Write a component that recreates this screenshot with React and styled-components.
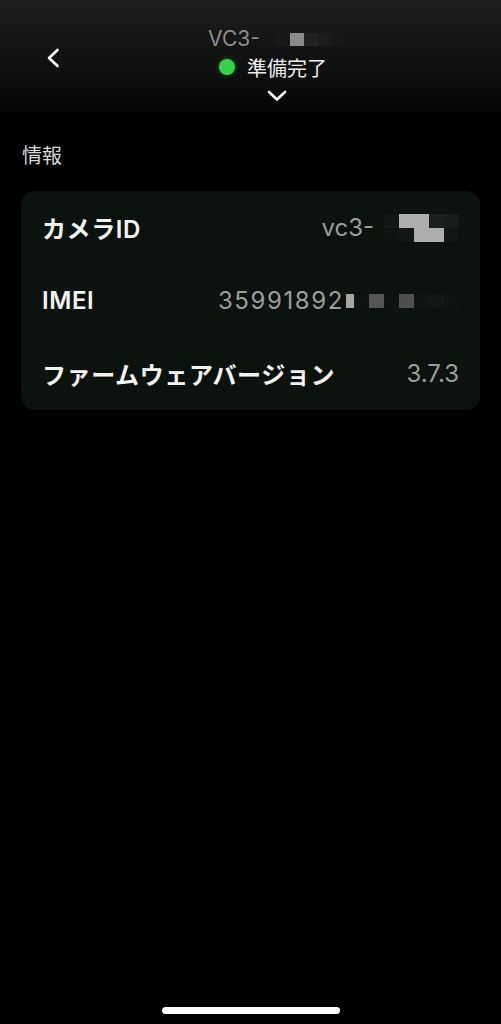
import React from "react";
import styled, { createGlobalStyle } from "styled-components";

const GlobalStyle = createGlobalStyle`
  html, body {
    margin: 0;
    padding: 0;
    background: #000;
  }
  body {
    font-family: Inter, "Noto Sans CJK JP", sans-serif;
    -webkit-font-smoothing: antialiased;
  }
`;

const Page = styled.div`
  min-height: 100vh;
  display: flex;
  flex-direction: column;
  background: linear-gradient(180deg, #1c1f1c 0px, #0a0b0a 90px, #000 125px);
`;

const Header = styled.header`
  display: flex;
  align-items: flex-start;
  padding: 27px 22px 0 31px;
`;

const BackButton = styled.button`
  width: 44px;
  height: 44px;
  margin-top: 9px;
  padding: 0;
  border: none;
  background: none;
  display: flex;
  align-items: center;
  justify-content: center;
  cursor: pointer;
`;

const TitleBlock = styled.div`
  flex: 1;
  display: flex;
  flex-direction: column;
  align-items: center;
`;

const Title = styled.div`
  display: flex;
  align-items: center;
  height: 24px;
  font-size: 21px;
  line-height: 24px;
  color: #8d8d8d;
  font-weight: 400;
`;

const Status = styled.div`
  display: flex;
  align-items: center;
  gap: 12px;
  height: 24px;
  margin-top: 4px;
  margin-right: 8px;
  font-size: 20px;
  color: #eeeeee;
`;

const Dot = styled.span`
  width: 16px;
  height: 16px;
  border-radius: 50%;
  background: #36d24c;
  box-shadow: 0 0 5px rgba(54, 210, 76, 0.45);
`;

const Expand = styled.button`
  margin-top: 11px;
  padding: 0;
  border: none;
  background: none;
  display: flex;
  cursor: pointer;
`;

const Body = styled.main`
  padding: 0 21px;
`;

const SectionTitle = styled.h2`
  margin: 40px 0 0 1px;
  font-size: 20px;
  line-height: 28px;
  font-weight: 400;
  color: #d9d9d9;
`;

const Card = styled.section`
  margin-top: 21px;
  background: #0c130e;
  border-radius: 14px;
`;

const Row = styled.div`
  height: 73px;
  padding: 0 21px;
  display: flex;
  align-items: center;
  justify-content: space-between;
`;

const Label = styled.span`
  font-size: 24px;
  font-weight: 600;
  letter-spacing: 0.6px;
  color: #f3f3f3;
  white-space: nowrap;
`;

const Value = styled.span`
  display: flex;
  align-items: center;
  font-size: 24px;
  font-weight: 400;
  letter-spacing: ${(p) => p.tracking || 0}px;
  color: #9d9d9d;
  white-space: nowrap;
`;

const Mosaic = styled.span`
  display: inline-grid;
  grid-template-columns: ${(p) => p.cols};
  grid-auto-rows: ${(p) => p.cellHeight}px;
  margin-left: ${(p) => p.gap}px;
`;

const Cell = styled.span`
  background: ${(p) => p.color};
`;

const Spacer = styled.div`
  flex: 1;
`;

const HomeIndicator = styled.div`
  align-self: center;
  width: 178px;
  height: 7px;
  margin-bottom: 10px;
  border-radius: 4px;
  background: #fff;
`;

const BlockMosaic = ({ cols, cellHeight, gap, cells }) => (
  <Mosaic cols={cols} cellHeight={cellHeight} gap={gap}>
    {cells.map((c, i) => (
      <Cell key={i} color={c} />
    ))}
  </Mosaic>
);

const F = "#111813";
const L = "#adadad";

const rows = [
  {
    label: "カメラID",
    value: "vc3-",
    mosaic: {
      cols: "repeat(5, 15px)",
      cellHeight: 14,
      gap: 10,
      cells: [F, L, L, "#1b201c", "#181d19", "#0e1510", F, L, L, F],
    },
  },
  {
    label: "IMEI",
    value: "35991892",
    tracking: 1.6,
    mosaic: {
      cols: "8px repeat(7, 15px)",
      cellHeight: 14,
      gap: 2,
      cells: ["#a6a6a6", "#0e1510", "#565656", "#0e1510", "#4f4f4f", "#0f1611", F, "#0e1510"],
    },
  },
  { label: "ファームウェアバージョン", value: "3.7.3" },
];

export default function App() {
  return (
    <>
      <GlobalStyle />
      <Page>
        <Header>
          <BackButton aria-label="戻る">
            <svg width="14" height="20" viewBox="0 0 14 20" fill="none">
              <polyline
                points="11.5,2 3,10 11.5,18"
                stroke="#fff"
                strokeWidth="2.6"
                strokeLinecap="round"
                strokeLinejoin="round"
              />
            </svg>
          </BackButton>
          <TitleBlock>
            <Title>
              VC3-
              <BlockMosaic
                cols="repeat(6, 14px)"
                cellHeight={13}
                gap={2}
                cells={["#151715", "#181a18", "#8a8a8a", "#202220", "#1b1d1b", "#171917"]}
              />
            </Title>
            <Status>
              <Dot />
              準備完了
            </Status>
            <Expand aria-label="展開">
              <svg width="20" height="12" viewBox="0 0 20 12" fill="none">
                <polyline
                  points="2,2 10,9.5 18,2"
                  stroke="#fff"
                  strokeWidth="2.6"
                  strokeLinecap="round"
                  strokeLinejoin="round"
                />
              </svg>
            </Expand>
          </TitleBlock>
        </Header>
        <Body>
          <SectionTitle>情報</SectionTitle>
          <Card>
            {rows.map((r) => (
              <Row key={r.label}>
                <Label>{r.label}</Label>
                <Value tracking={r.tracking}>
                  {r.value}
                  {r.mosaic && <BlockMosaic {...r.mosaic} />}
                </Value>
              </Row>
            ))}
          </Card>
        </Body>
        <Spacer />
        <HomeIndicator />
      </Page>
    </>
  );
}
